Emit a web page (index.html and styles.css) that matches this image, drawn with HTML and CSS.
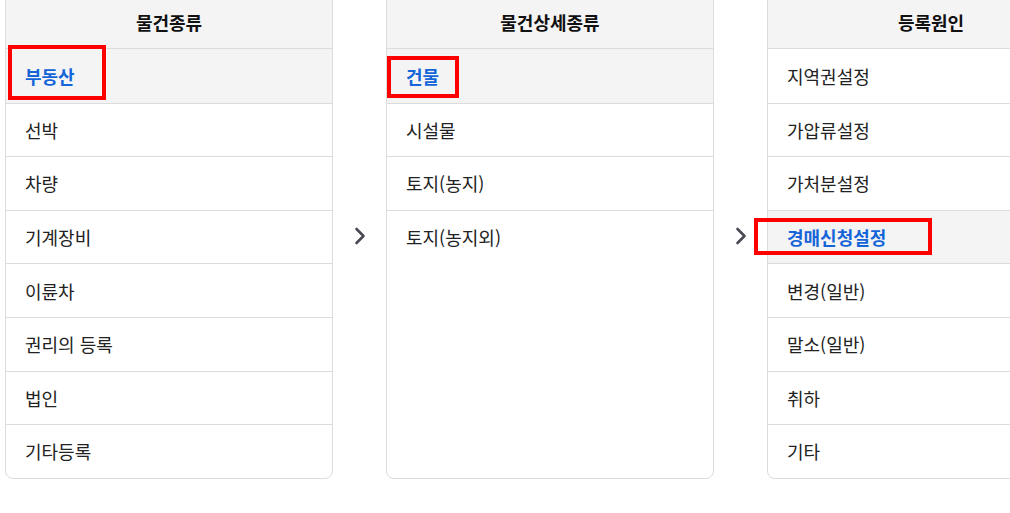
FILE: index.html
```html
<!DOCTYPE html>
<html lang="ko">
<head>
    <meta charset="UTF-8">
    <meta name="viewport" content="width=device-width, initial-scale=1.0">
    <title>등록원인 선택</title>
    <link rel="stylesheet" href="styles.css">
</head>
<body>
    <div class="selector">
        <div class="panel">
            <div class="panel-head">물건종류</div>
            <ul class="panel-list">
                <li class="active">부동산<span class="mark mark-1"></span></li>
                <li>선박</li>
                <li>차량</li>
                <li>기계장비</li>
                <li>이륜차</li>
                <li>권리의 등록</li>
                <li>법인</li>
                <li>기타등록</li>
            </ul>
        </div>

        <div class="step">
            <svg width="12" height="18" viewBox="0 0 12 18"><polyline points="2.5,2 9.5,9 2.5,16" fill="none" stroke="#4a4a55" stroke-width="2.6" stroke-linecap="round" stroke-linejoin="round"/></svg>
        </div>

        <div class="panel">
            <div class="panel-head">물건상세종류</div>
            <ul class="panel-list">
                <li class="active">건물<span class="mark mark-2"></span></li>
                <li>시설물</li>
                <li>토지(농지)</li>
                <li>토지(농지외)</li>
            </ul>
        </div>

        <div class="step">
            <svg width="12" height="18" viewBox="0 0 12 18"><polyline points="2.5,2 9.5,9 2.5,16" fill="none" stroke="#4a4a55" stroke-width="2.6" stroke-linecap="round" stroke-linejoin="round"/></svg>
        </div>

        <div class="panel">
            <div class="panel-head">등록원인</div>
            <ul class="panel-list">
                <li>지역권설정</li>
                <li>가압류설정</li>
                <li>가처분설정</li>
                <li class="active">경매신청설정<span class="mark mark-3"></span></li>
                <li>변경(일반)</li>
                <li>말소(일반)</li>
                <li>취하</li>
                <li>기타</li>
            </ul>
        </div>
    </div>
</body>
</html>
```

FILE: styles.css
```css
body {
    margin: 0;
    padding: 0;
    overflow: hidden;
    font-family: "Noto Sans CJK KR", "Noto Sans", sans-serif;
    color: #222;
    background: #fff;
}

.selector {
    display: flex;
    align-items: stretch;
    margin-top: -7px; /* page is scrolled a little */
    margin-left: 5px;
    width: 1200px;
}

.panel {
    flex: 0 0 328px;
    box-sizing: border-box;
    border: 1px solid #dcdcdc;
    border-radius: 8px;
    background: #fff;
}

.panel-head {
    height: 55px;
    box-sizing: border-box;
    border-bottom: 1px solid #dcdcdc;
    border-radius: 8px 8px 0 0;
    background: #f4f4f4;
    display: flex;
    align-items: center;
    justify-content: center;
    padding-top: 1px;
    font-size: 18px;
    font-weight: 700;
    color: #111;
}

.panel-list {
    list-style: none;
    margin: 0;
    padding: 0;
}

.panel-list li {
    position: relative;
    height: 53.6px;
    box-sizing: border-box;
    padding: 0 19px;
    display: flex;
    align-items: center;
    font-size: 18px;
}

.panel-list li + li {
    border-top: 1px solid #dcdcdc;
}

.panel-list li.active {
    background: #f4f4f4;
    color: #1565d8;
    font-weight: 700;
}

.step {
    flex: 0 0 53px;
    display: flex;
    align-items: center;
    justify-content: center;
}

/* red annotation boxes */
.mark {
    position: absolute;
    box-sizing: border-box;
    border: 4px solid #ff0000;
}

.mark-1 {
    left: 2px;
    top: -4px;
    width: 98px;
    height: 55px;
}

.mark-2 {
    left: 0;
    top: 7px;
    width: 72px;
    height: 42px;
}

.mark-3 {
    left: -14px;
    top: 7px;
    width: 178px;
    height: 37px;
}
```
